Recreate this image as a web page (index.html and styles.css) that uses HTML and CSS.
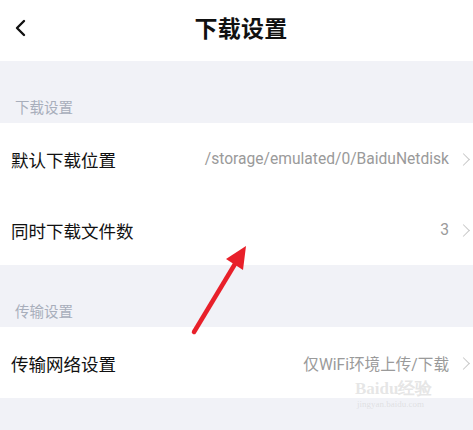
FILE: index.html
```html
<!DOCTYPE html>
<html lang="zh">
<head>
<meta charset="utf-8">
<link rel="stylesheet" href="styles.css">
</head>
<body>
<div class="page">
  <header class="topbar">
    <svg class="back" width="14" height="18" viewBox="0 0 14 18"><path d="M10 2 L3 9 L10 16" fill="none" stroke="#111" stroke-width="2.4" stroke-linecap="round" stroke-linejoin="round"/></svg>
    <h1 class="title">下载设置</h1>
  </header>
  <div class="section-label"><span>下载设置</span></div>
  <div class="card">
    <div class="row"><span class="label">默认下载位置</span><span class="value">/storage/emulated/0/BaiduNetdisk</span><span class="chev"></span></div>
    <div class="row"><span class="label">同时下载文件数</span><span class="value">3</span><span class="chev"></span></div>
  </div>
  <div class="section-label"><span>传输设置</span></div>
  <div class="card">
    <div class="row"><span class="label">传输网络设置</span><span class="value">仅WiFi环境上传/下载</span><span class="chev"></span></div>
  </div>
  <div class="rest"></div>
  <svg class="arrow" width="473" height="430" viewBox="0 0 473 430">
    <line x1="194" y1="332" x2="238" y2="259" stroke="#e8202a" stroke-width="4.5" stroke-linecap="round"/>
    <polygon points="246,246 243,270 226,259" fill="#e8202a"/>
  </svg>
  <div class="watermark">
    <div class="wm-top">Bai<span class="wm-du">du</span>经验</div>
    <div class="wm-url">jingyan.baidu.com</div>
  </div>
</div>
</body>
</html>
```
FILE: styles.css
```css
* { box-sizing: border-box; margin: 0; padding: 0; }
html, body { width: 473px; height: 430px; overflow: hidden; }
body { font-family: "Noto Sans CJK SC", "Noto Sans", sans-serif; background: #f1f2f7; }
.page { position: relative; width: 473px; height: 430px; display: flex; flex-direction: column; }
.topbar { height: 61px; background: #fff; display: flex; align-items: center; justify-content: center; position: relative; padding-left: 9px; }
.back { position: absolute; left: 14px; top: 19px; }
.title { font-size: 23px; font-weight: 700; color: #111; letter-spacing: 0.3px; line-height: 1; margin-top: -7px; }
.section-label { height: 62px; display: flex; align-items: flex-end; padding: 0 0 6px 15px; }
.section-label span { font-size: 14.5px; line-height: 20px; color: #a8aebb; }
.card { background: #fff; }
.row { height: 71px; display: flex; align-items: center; padding: 0 0 0 11px; }
.label { font-size: 17.5px; color: #111; flex: 1; line-height: 1; margin-top: 2px; }
.value { font-family: Roboto, "Noto Sans CJK SC", sans-serif; font-size: 15.6px; color: #9a9a9a; margin-top: 1px; }
.chev { width: 9px; height: 9px; border-top: 1.4px solid #c8c8c8; border-right: 1.4px solid #c8c8c8; transform: rotate(45deg); margin: 2px 5px 0 10px; }
.rest { flex: 1; }
.arrow { position: absolute; left: 0; top: 0; pointer-events: none; }
.watermark { position: absolute; left: 355px; top: 380px; color: rgba(200,200,200,0.45); font-family: "Liberation Serif", serif; }
.wm-top { font-size: 17px; font-weight: 700; line-height: 18px; }
.wm-du { display: inline-block; }
.wm-url { font-size: 9px; line-height: 12px; padding-left: 2px; }
```
